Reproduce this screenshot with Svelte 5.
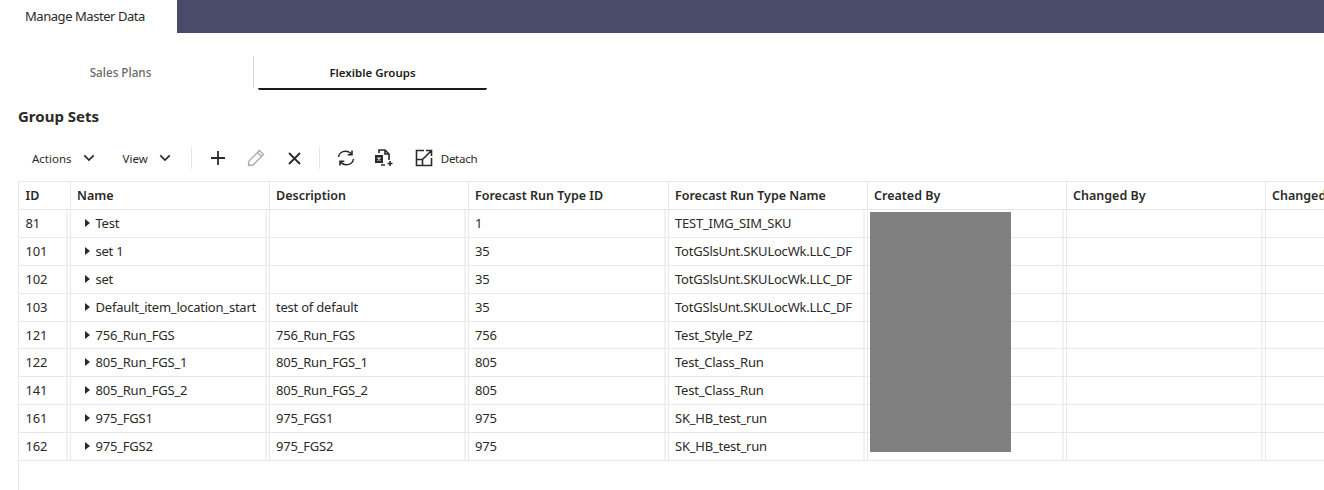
<script>
	const columns = [
		{ label: "ID", width: 51 },
		{ label: "Name", width: 199 },
		{ label: "Description", width: 199 },
		{ label: "Forecast Run Type ID", width: 200 },
		{ label: "Forecast Run Type Name", width: 199 },
		{ label: "Created By", width: 199 },
		{ label: "Changed By", width: 199 },
		{ label: "Changed On", width: 199 },
	];

	const longType = "TotGSlsUnt.SKULocWk.LLC_DF";

	const rows = [
		{ id: 81, name: "Test", description: "", runId: 1, runName: "TEST_IMG_SIM_SKU" },
		{ id: 101, name: "set 1", description: "", runId: 35, runName: longType },
		{ id: 102, name: "set", description: "", runId: 35, runName: longType },
		{ id: 103, name: "Default_item_location_start", description: "test of default", runId: 35, runName: longType },
		{ id: 121, name: "756_Run_FGS", description: "756_Run_FGS", runId: 756, runName: "Test_Style_PZ" },
		{ id: 122, name: "805_Run_FGS_1", description: "805_Run_FGS_1", runId: 805, runName: "Test_Class_Run" },
		{ id: 141, name: "805_Run_FGS_2", description: "805_Run_FGS_2", runId: 805, runName: "Test_Class_Run" },
		{ id: 161, name: "975_FGS1", description: "975_FGS1", runId: 975, runName: "SK_HB_test_run" },
		{ id: 162, name: "975_FGS2", description: "975_FGS2", runId: 975, runName: "SK_HB_test_run" },
	];
</script>

<main>
	<header class="topbar">
		<div class="page-tab">Manage Master Data</div>
	</header>

	<nav class="tabs">
		<div class="tab">Sales Plans</div>
		<div class="tab active">Flexible Groups</div>
	</nav>

	<h2>Group Sets</h2>

	<div class="toolbar">
		<button class="menu actions">
			Actions
			<svg width="12" height="8" viewBox="0 0 14 9"><path d="M1.500 1.500 7 7l5.500-5.500" /></svg>
		</button>
		<button class="menu view">
			View
			<svg width="12" height="8" viewBox="0 0 14 9"><path d="M1.500 1.500 7 7l5.500-5.500" /></svg>
		</button>
		<span class="sep first"></span>
		<button class="icon add" aria-label="Add">
			<svg width="14" height="14" viewBox="0 0 14 14"><path d="M7 0v14M0 7h14" /></svg>
		</button>
		<button class="icon edit" aria-label="Edit">
			<svg width="18" height="18" viewBox="0 0 18 18"><path class="light" d="M12.500 1.500 16.500 5.500 6 16 1.500 16.500 2 12ZM10.500 3.500l4 4" /></svg>
		</button>
		<button class="icon remove" aria-label="Delete">
			<svg width="13" height="13" viewBox="0 0 13 13"><path d="M1 1l11 11M12 1 1 12" /></svg>
		</button>
		<span class="sep second"></span>
		<button class="icon refresh" aria-label="Refresh">
			<svg width="18" height="18" viewBox="0 0 18 18">
				<path d="M1.500 8C2 4.500 5 2.300 8.500 2.300c2.700 0 4.800 1.200 6 3.200M15 1.500v4.300h-4.300" />
				<path d="M16.500 10c-.5 3.500-3.500 5.700-7 5.700-2.700 0-4.800-1.200-6-3.200M3 16.500v-4.300h4.300" />
			</svg>
		</button>
		<button class="icon export" aria-label="Export">
			<svg width="20" height="18" viewBox="0 0 20 18">
				<path d="M5 4V1h6l4 4v6M11 1v4h4M7 16h4" />
				<rect class="solid" x="1" y="6" width="8" height="8" />
				<path class="mark" d="M3.500 8.500l3 3M6.500 8.500l-3 3" />
				<path d="M16 12v5M13.500 14.500h5" />
			</svg>
		</button>
		<button class="icon detach" aria-label="Detach">
			<svg width="18" height="18" viewBox="0 0 18 18">
				<path d="M9 1.500H1.500v15h15V9M1.500 10.500h6v6M7.500 10.500 16.500 1.500M11 1.500h5.500V7" />
			</svg>
		</button>
		<span class="detach-label">Detach</span>
	</div>

	<div class="grid">
		<table>
			<colgroup>
				{#each columns as col}
					<col style="width: {col.width}px" />
				{/each}
			</colgroup>
			<thead>
				<tr>
					{#each columns as col}
						<th>{col.label}</th>
					{/each}
				</tr>
			</thead>
			<tbody>
				{#each rows as row}
					<tr>
						<td><div class="cell">{row.id}</div></td>
						<td>
							<div class="cell name">
								<span class="caret"></span>{row.name}
							</div>
						</td>
						<td><div class="cell">{row.description}</div></td>
						<td><div class="cell">{row.runId}</div></td>
						<td><div class="cell">{row.runName}</div></td>
						<td><div class="cell"></div></td>
						<td><div class="cell"></div></td>
						<td><div class="cell"></div></td>
					</tr>
				{/each}
			</tbody>
		</table>
		<!-- redacted block over the Created By column -->
		<div class="redacted"></div>
	</div>
</main>

<style>
	:global(body) {
		margin: 0;
		background: #fff;
		overflow: hidden;
	}

	main {
		width: 1324px;
		height: 490px;
		overflow: hidden;
		font-family: "Noto Sans", "Open Sans", sans-serif;
		color: #2b2a28;
		font-size: 13px;
	}

	.topbar {
		height: 33px;
		background: #494c69;
		display: flex;
	}

	.page-tab {
		width: 152px;
		padding-left: 25px;
		background: #fff;
		line-height: 33px;
		font-size: 13px;
		letter-spacing: -0.45px;
	}

	.tabs {
		display: flex;
		margin-top: 23px;
		height: 35px;
	}

	.tab {
		width: 241px;
		padding-right: 12px;
		border-right: 1px solid #d4d4d4;
		text-align: center;
		line-height: 33px;
		font-size: 11.7px;
		font-weight: 500;
		color: #6c6a68;
		height: 32px;
	}

	.tab.active {
		width: 229px;
		padding-right: 0;
		margin-left: 4px;
		height: 32px;
		border-right: 0;
		border-bottom: 2px solid #1d1b19;
		border-radius: 0 0 2px 2px;
		color: #1d1b19;
		font-weight: 600;
		font-size: 11.5px;
	}

	h2 {
		margin: 15px 0 0 18px;
		font-size: 15px;
		line-height: 20px;
		font-weight: 700;
		color: #2b2a28;
	}

	.toolbar {
		display: flex;
		align-items: center;
		height: 30px;
		margin-top: 17px;
		padding-left: 32px;
		font-size: 11.5px;
	}

	button {
		border: 0;
		background: none;
		padding: 0;
		font: inherit;
		color: inherit;
		display: flex;
		align-items: center;
	}

	svg {
		display: block;
		fill: none;
		stroke: #2b2a28;
		stroke-width: 1.6;
	}

	.menu svg {
		stroke-width: 2;
		margin-left: 11px;
	}

	.view {
		margin-left: 28px;
	}

	.sep {
		width: 1px;
		height: 22px;
		background: #e6e6e6;
	}

	.sep.first {
		margin-left: 20px;
	}

	.add {
		margin-left: 19px;
	}

	.add svg {
		stroke-width: 1.8;
	}

	.edit {
		margin-left: 22px;
	}

	.light {
		stroke: #ababab;
		stroke-width: 1.4;
	}

	.remove {
		margin-left: 23px;
	}

	.remove svg {
		stroke-width: 1.8;
	}

	.sep.second {
		margin-left: 18px;
	}

	.refresh {
		margin-left: 17px;
	}

	.export {
		margin-left: 19px;
	}

	.export .solid {
		fill: #2b2a28;
		stroke: none;
	}

	.export .mark {
		stroke: #fff;
		stroke-width: 1.1;
	}

	.detach {
		margin-left: 21px;
	}

	.detach-label {
		margin-left: 8px;
		letter-spacing: -0.25px;
	}

	.grid {
		position: relative;
		margin: 8px 0 0 18px;
		height: 309px;
		border-left: 1px solid #e8e8e8;
	}

	table {
		border-collapse: collapse;
		table-layout: fixed;
		width: 1445px;
	}

	th {
		height: 27px;
		padding: 0 0 0 6.5px;
		text-align: left;
		font-size: 12.5px;
		font-weight: 600;
		border-top: 1px solid #e8e8e8;
		border-bottom: 1px solid #e8e8e8;
		border-right: 1px solid #e8e8e8;
		white-space: nowrap;
		overflow: hidden;
	}

	td {
		height: 26.9px;
		padding: 0;
		border-bottom: 1px solid #e8e8e8;
		border-right: 1px solid #e8e8e8;
		letter-spacing: -0.22px;
	}

	.cell {
		height: 26.9px;
		line-height: 26px;
		padding-left: 6.5px;
		margin-right: 2px;
		border-right: 2px solid #f2f2f2;
		white-space: nowrap;
		overflow: hidden;
	}

	.cell.name {
		padding-left: 14px;
	}

	.caret {
		display: inline-block;
		width: 0;
		height: 0;
		margin-right: 6px;
		vertical-align: 1px;
		border-left: 5px solid #2b2a28;
		border-top: 4px solid transparent;
		border-bottom: 4px solid transparent;
	}

	.redacted {
		position: absolute;
		left: 851px;
		top: 31px;
		width: 141px;
		height: 240px;
		background: #808080;
	}
</style>
